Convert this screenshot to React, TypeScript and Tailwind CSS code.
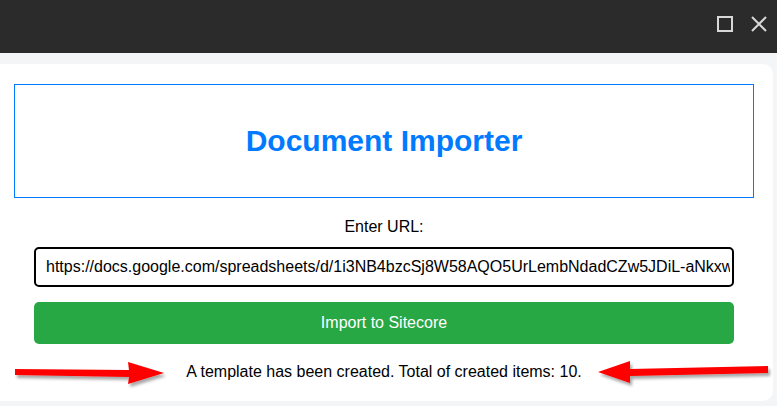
import React from 'react'

function Arrows() {
  return (
    <svg className="absolute left-0 top-0 pointer-events-none" width="777" height="406" viewBox="0 0 777 406">
      <defs>
        <filter id="sh" x="-20%" y="-50%" width="140%" height="200%">
          <feDropShadow dx="2" dy="3" stdDeviation="1.5" floodColor="#000" floodOpacity="0.35" />
        </filter>
      </defs>
      <g filter="url(#sh)" fill="#f00">
        <polygon points="15,369 129,370 128,362 164,373 128,384 129,377 15,375" />
        <polygon points="768,366 630,369 630,361 598,372 630,383 630,376 768,373" />
      </g>
    </svg>
  )
}

export default function App() {
  return (
    <div className="relative w-[777px] h-[406px] overflow-hidden bg-[#f4f5f7]" style={{ fontFamily: '"Liberation Sans", Arial, sans-serif' }}>
      {/* title bar */}
      <div className="h-[53px] bg-[#2b2b2b] flex items-center justify-end pr-[10px] gap-[18px]">
        <svg width="16" height="16" viewBox="0 0 16 16" className="mt-[-6px]">
          <rect x="1" y="1" width="14" height="14" fill="none" stroke="#d8d8d8" strokeWidth="2" />
        </svg>
        <svg width="16" height="16" viewBox="0 0 16 16" className="mt-[-6px]">
          <path d="M1 1 L15 15 M15 1 L1 15" stroke="#d8d8d8" strokeWidth="2" />
        </svg>
      </div>

      <div className="pt-[11px] pr-[4px]">
        <div className="h-[337px] bg-white rounded-r-[10px] pl-[14px] pr-[19px] pt-[20px]">
          <div className="h-[114px] border border-[#007bff] flex items-center justify-center">
            <h1 className="text-[30px] font-bold text-[#007bff] leading-none">Document Importer</h1>
          </div>

          <label className="block text-center text-[16px] leading-[18px] mt-[20px] text-black">Enter URL:</label>

          <div className="px-[20px]">
            <input
              type="text"
              readOnly
              value="https://docs.google.com/spreadsheets/d/1i3NB4bzcSj8W58AQO5UrLembNdadCZw5JDiL-aNkxw8/edit"
              className="mt-[11px] w-full h-[40px] border-2 border-black rounded-[5px] pl-[10px] pr-[2px] text-[16px] text-black outline-none bg-white"
            />
            <button className="mt-[15px] w-full h-[42px] bg-[#28a745] rounded-[5px] text-white text-[16px]">
              Import to Sitecore
            </button>
          </div>

          <p className="mt-[19px] text-center text-[16px] leading-[18px] text-black">
            A template has been created. Total of created items: 10.
          </p>
        </div>
      </div>

      <Arrows />
    </div>
  )
}
